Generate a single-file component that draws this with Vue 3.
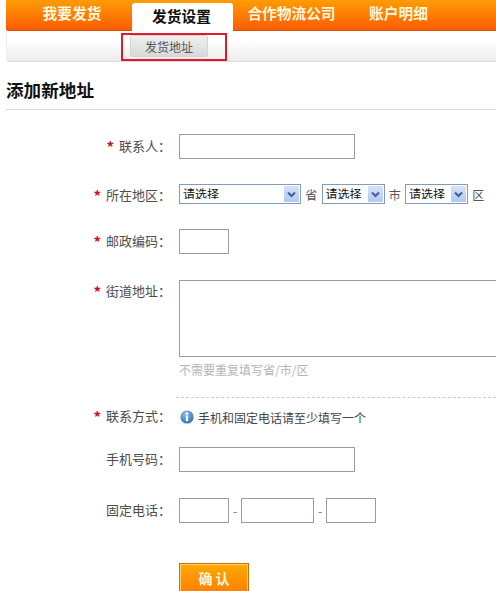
<template>
  <div class="page">
    <div class="tabs">
      <a
        v-for="tab in tabs"
        :key="tab.name"
        :class="['tab', { active: tab.active }]"
        :style="{ width: tab.width + 'px' }"
      >{{ tab.name }}</a>
    </div>
    <div class="subbar">
      <button class="sub-btn">发货地址</button>
      <div class="red-mark"></div>
    </div>

    <h2 class="title">添加新地址</h2>

    <form class="form" @submit.prevent>
      <div class="row row-name">
        <label class="label"><i>*</i>联系人：</label>
        <input class="text wide" type="text" />
      </div>

      <div class="row row-area">
        <label class="label"><i>*</i>所在地区：</label>
        <div class="area">
          <template v-for="item in areas" :key="item.unit">
            <span class="sel" :style="{ width: item.width + 'px' }">
              <select><option>请选择</option></select>
              <span class="sel-arrow">
                <svg width="9" height="7" viewBox="0 0 9 7"><path d="M1 1.5 4.5 5 8 1.5" fill="none" stroke="#3d5f9e" stroke-width="2" /></svg>
              </span>
            </span>
            <span class="unit">{{ item.unit }}</span>
          </template>
        </div>
      </div>

      <div class="row row-zip">
        <label class="label"><i>*</i>邮政编码：</label>
        <input class="text short" type="text" />
      </div>

      <div class="row row-street">
        <label class="label"><i>*</i>街道地址：</label>
        <div>
          <textarea class="area-text"></textarea>
          <p class="hint">不需要重复填写省/市/区</p>
        </div>
      </div>

      <div class="dashed"></div>

      <div class="row row-contact">
        <label class="label"><i>*</i>联系方式：</label>
        <div class="tip">
          <svg class="tip-icon" width="14" height="14" viewBox="0 0 14 14">
            <defs>
              <radialGradient id="infoFill" cx="0.4" cy="0.3" r="0.8">
                <stop offset="0" stop-color="#8fc0ec" />
                <stop offset="1" stop-color="#2668ad" />
              </radialGradient>
            </defs>
            <circle cx="7" cy="7" r="6.6" fill="url(#infoFill)" />
            <circle cx="7" cy="3.6" r="1.3" fill="#fff" />
            <rect x="5.9" y="5.6" width="2.2" height="5.6" fill="#fff" />
          </svg>
          手机和固定电话请至少填写一个
        </div>
      </div>

      <div class="row row-mobile">
        <label class="label">手机号码：</label>
        <input class="text wide" type="text" />
      </div>

      <div class="row row-phone">
        <label class="label">固定电话：</label>
        <div class="phone">
          <input class="text short" type="text" />
          <span class="dash">-</span>
          <input class="text mid" type="text" />
          <span class="dash">-</span>
          <input class="text short" type="text" />
        </div>
      </div>

      <div class="row row-submit">
        <span></span>
        <button class="confirm" type="submit">确 认</button>
      </div>
    </form>
  </div>
</template>

<script setup>
const tabs = [
  { name: '我要发货', width: 126 },
  { name: '发货设置', width: 101, active: true },
  { name: '合作物流公司', width: 117 },
  { name: '账户明细', width: 97 },
]

const areas = [
  { unit: '省', width: 122 },
  { unit: '市', width: 63 },
  { unit: '区', width: 63 },
]
</script>

<style scoped>
.page {
  position: relative;
  width: 496px;
  height: 591px;
  overflow: hidden;
  background: #fff;
  font-family: "Noto Sans CJK SC", "Liberation Sans", sans-serif;
  font-size: 12px;
  color: #444;
}

.tabs {
  display: flex;
  height: 31px;
  margin-left: 6px;
  padding-top: 3px;
  box-sizing: border-box;
  background: linear-gradient(180deg, #ff9c05, #fc5c02);
  border-bottom: 1px solid #d9530b;
  border-radius: 0 0 0 2px;
}

.tab {
  display: block;
  box-sizing: border-box;
  height: 28px;
  line-height: 20px;
  text-align: center;
  font-size: 14.7px;
  font-weight: 700;
  color: #fff6df;
}

.tab:first-child {
  padding-left: 6px;
}

.tab.active {
  padding-right: 2px;
  line-height: 26px;
  background: #fff;
  color: #111;
  border-radius: 3px 3px 0 0;
  position: relative;
  z-index: 1;
}

.subbar {
  position: relative;
  display: flex;
  align-items: flex-start;
  height: 31px;
  box-sizing: border-box;
  margin-left: 6px;
  padding: 4px 0 0 123px;
  background: linear-gradient(180deg, #fff 30%, #ececec);
  border-bottom: 1px solid #dcdcdc;
  border-left: 1px solid #eee;
  border-radius: 0 0 0 4px;
}

.sub-btn {
  width: 78px;
  height: 22px;
  padding: 0;
  border: 1px solid #d4d4d4;
  border-radius: 2px;
  background: linear-gradient(180deg, #f0f0f0, #d9d9d9);
  font: inherit;
  color: #555;
}

.red-mark {
  position: absolute;
  left: 114px;
  top: 2px;
  width: 106px;
  height: 28px;
  box-sizing: border-box;
  border: 2px solid #e3192b;
}

.title {
  margin: 0 0 0 6px;
  padding: 17px 0 8px;
  height: 48px;
  box-sizing: border-box;
  border-bottom: 1px solid #dedede;
  font-size: 17.6px;
  line-height: 22px;
  font-weight: 700;
  color: #111;
}

.row {
  display: grid;
  grid-template-columns: 179px 1fr;
  align-items: center;
}

.label {
  padding: 0 8px 1px 0;
  text-align: right;
  font-size: 13px;
  line-height: 16px;
  color: #4d4d4d;
  white-space: nowrap;
}

.label i {
  margin-right: 5px;
  font-style: normal;
  font-size: 15px;
  font-weight: 700;
  color: #d01020;
  vertical-align: -2px;
}

.text {
  display: block;
  height: 25px;
  box-sizing: border-box;
  padding: 0 3px;
  border: 1px solid #9c9c9c;
  background: #fff;
}

.wide { width: 176px; }
.short { width: 50px; }
.mid { width: 73px; }

.row-name { margin-top: 24px; }
.row-area { margin-top: 25px; height: 20px; }
.row-area .label { padding: 3px 8px 0 0; }
.row-zip { margin-top: 25px; }
.row-street { margin-top: 26px; align-items: start; }
.row-street .label { padding-top: 1px; padding-bottom: 0; line-height: 19px; }

.area {
  display: flex;
  align-items: center;
  height: 20px;
}

.sel {
  position: relative;
  display: block;
  height: 20px;
}

.sel select {
  display: block;
  width: 100%;
  height: 20px;
  padding: 0 0 4px 3px;
  box-sizing: border-box;
  appearance: none;
  border: 1px solid #7f9db9;
  border-radius: 0;
  background: #fff;
  font: 12px "Noto Sans CJK SC", sans-serif;
  color: #111;
}

.sel-arrow {
  position: absolute;
  top: 2px;
  right: 2px;
  width: 15px;
  height: 16px;
  display: flex;
  align-items: center;
  justify-content: center;
  background: linear-gradient(180deg, #d5e1f8, #b4c8ee);
  border-radius: 1px;
}

.unit {
  width: 20.5px;
  text-align: center;
  font-size: 12px;
  color: #555;
}

.area-text {
  display: block;
  width: 330px;
  height: 77px;
  box-sizing: border-box;
  border: 1px solid #9c9c9c;
  resize: none;
}

.hint {
  margin: 4px 0 0;
  font-size: 12px;
  line-height: 17px;
  color: #b5b5b5;
}

.dashed {
  margin: 19px 0 0 176px;
  border-top: 1px dashed #ccc;
}

.row-contact { margin-top: 9px; height: 20px; }

.tip {
  display: flex;
  align-items: center;
  gap: 4px;
  padding-left: 1px;
  font-size: 12px;
  color: #444;
}

.row-mobile { margin-top: 20px; }
.row-phone { margin-top: 26px; }

.phone {
  display: flex;
  align-items: center;
}

.dash {
  width: 12px;
  text-align: center;
  color: #777;
}

.row-submit { margin-top: 40px; align-items: start; }

.confirm {
  width: 70px;
  height: 34px;
  padding: 0 0 4px;
  border: 1px solid #c8710a;
  outline: 1px solid #ffcf70;
  outline-offset: -2px;
  background: linear-gradient(180deg, #ffa905, #fd7a02);
  font: 700 14px "Noto Sans CJK SC", sans-serif;
  color: #fff6df;
}
</style>

<style>
body { background: #fff; }
</style>
